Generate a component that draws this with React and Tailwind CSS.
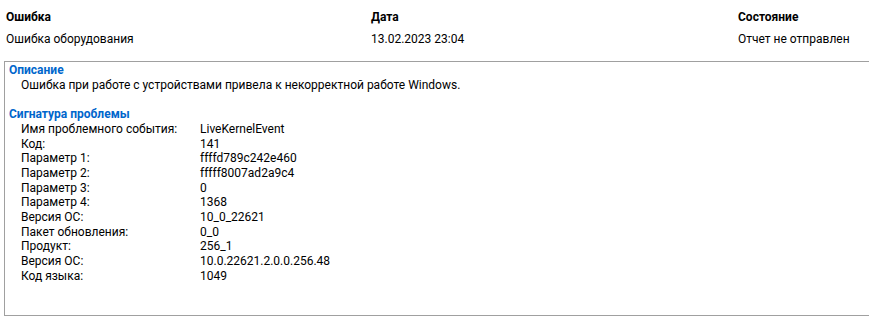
const header = [
  { title: 'Ошибка', value: 'Ошибка оборудования', width: 'w-[365px]' },
  { title: 'Дата', value: '13.02.2023 23:04', width: 'w-[367px]' },
  { title: 'Состояние', value: 'Отчет не отправлен', width: 'flex-1' },
];

const signature = [
  ['Имя проблемного события:', 'LiveKernelEvent'],
  ['Код:', '141'],
  ['Параметр 1:', 'ffffd789c242e460'],
  ['Параметр 2:', 'fffff8007ad2a9c4'],
  ['Параметр 3:', '0'],
  ['Параметр 4:', '1368'],
  ['Версия ОС:', '10_0_22621'],
  ['Пакет обновления:', '0_0'],
  ['Продукт:', '256_1'],
  ['Версия ОС:', '10.0.22621.2.0.0.256.48'],
  ['Код языка:', '1049'],
];

const App = () => {
  return (
    <div className="w-[869px] h-[318px] bg-white overflow-hidden text-black text-[12px] font-['Roboto','Noto_Sans',sans-serif]">
      <div className="flex pl-[6px] pt-[9px]">
        {header.map((col) => (
          <div key={col.title} className={col.width}>
            <p className="font-bold leading-[16px]">{col.title}</p>
            <p className="leading-[16px] mt-[6px]">{col.value}</p>
          </div>
        ))}
      </div>

      <div className="ml-[4px] mt-[14px] h-[255px] border-l border-t border-b border-[#a0a0a0] pl-[4px] pt-[1px] leading-[14.7px]">
        <p className="font-bold text-[#0066cc]">Описание</p>
        <p className="pl-[12px]">
          Ошибка при работе с устройствами привела к некорректной работе Windows.
        </p>
        <p className="font-bold text-[#0066cc] mt-[14.7px]">Сигнатура проблемы</p>
        {signature.map(([label, value], i) => (
          <div key={i} className="flex pl-[12px]">
            <span className="w-[179px]">{label}</span>
            <span>{value}</span>
          </div>
        ))}
      </div>
    </div>
  );
};

export default App;
